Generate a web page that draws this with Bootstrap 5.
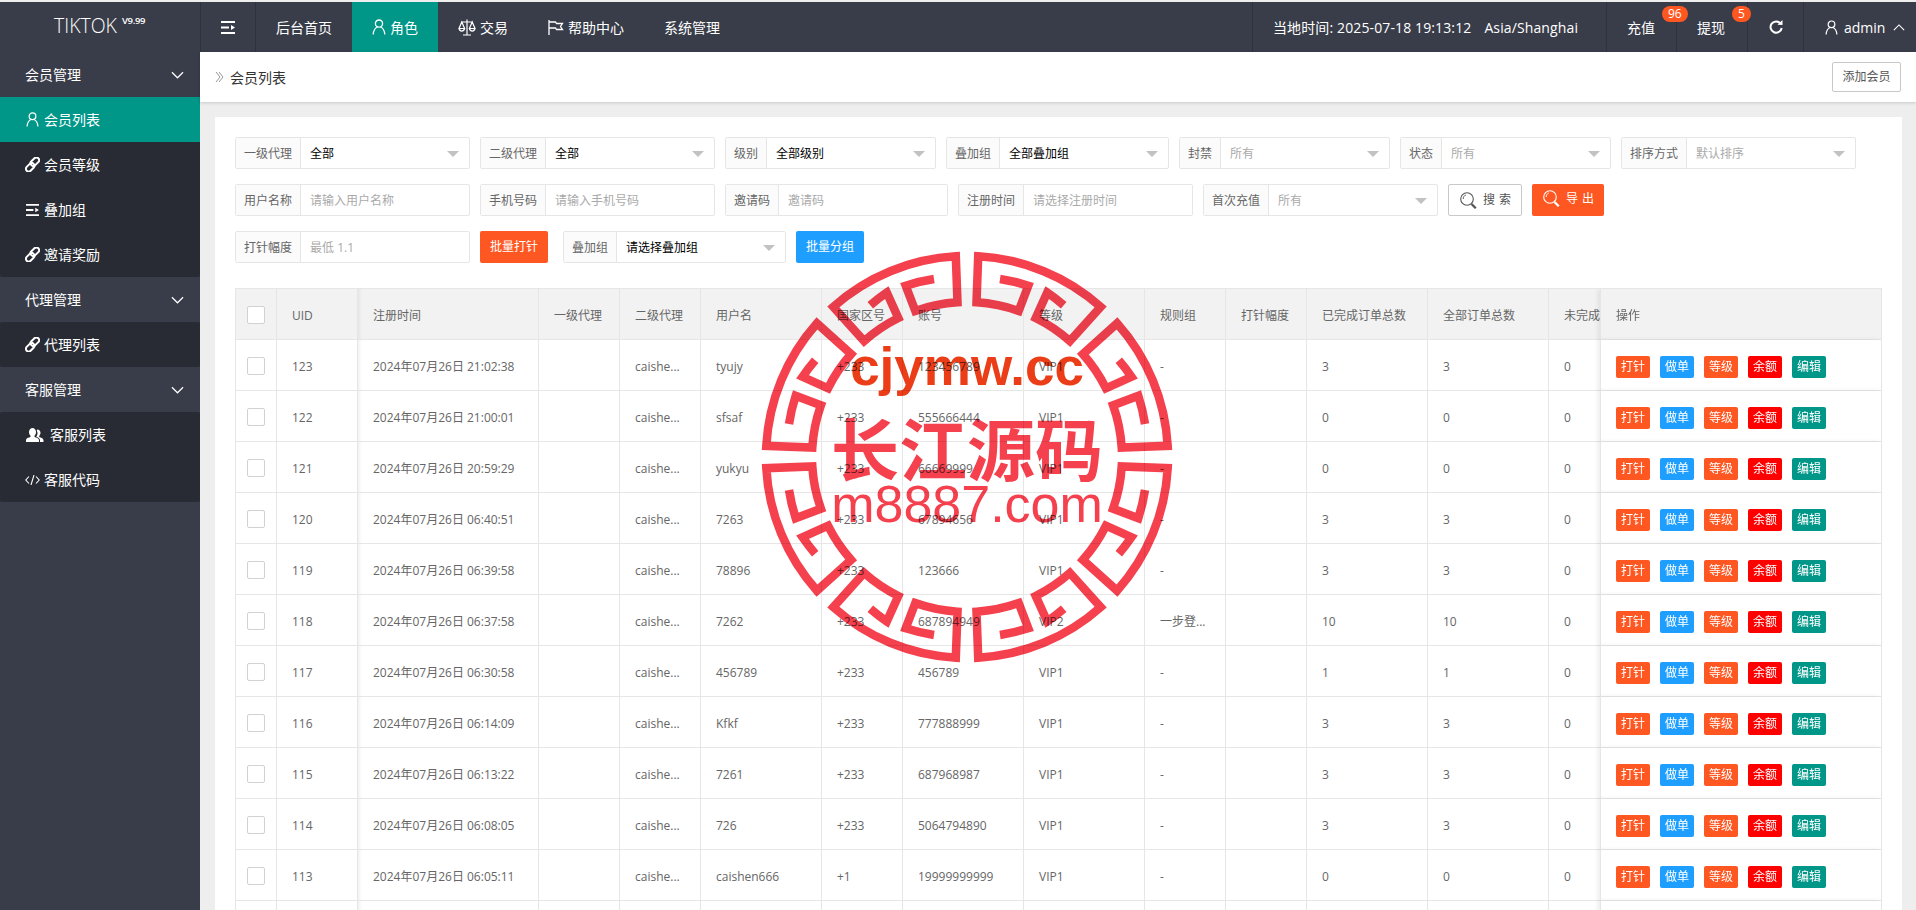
<!DOCTYPE html>
<html lang="zh-CN">
<head>
<meta charset="utf-8">
<title>会员列表</title>
<link href="https://cdn.jsdelivr.net/npm/bootstrap@5.3.0/dist/css/bootstrap.min.css" rel="stylesheet">
<style>
html,body{height:100%;overflow:hidden}
body{font-family:"Open Sans","Noto Sans CJK SC",sans-serif;font-size:14px;color:#666;background:#eee;padding-top:2px;position:relative}
.top-bar{height:50px;background:#393d49;color:#fff}
.logo-box{width:200px;height:50px;flex:none;font-family:"Open Sans",sans-serif;font-size:19.500px;padding-left:54px;line-height:48px;font-weight:300;white-space:nowrap}
.logo-box sup{font-size:9.500px;font-weight:600;top:-.9em;margin-left:5px;letter-spacing:-.3px}
.top-cell{height:50px;padding:0 20px;color:#fff;text-decoration:none;white-space:nowrap;position:relative}
.top-cell:hover{color:#fff}
.cell-line{border-left:1px solid #2f323c}
.top-on{background:#009688}
.menu-cell{width:55px;padding:0}
.clock-cell{width:354px;padding-left:20px;letter-spacing:.12px}
.clock-zone{margin-left:13px}
.money-a{width:70px}
.money-b{width:71px}
.reload-cell{width:56px;padding:0}
.admin-cell{width:113px;padding:0 0 0 21px}
.admin-name{margin:0 8px 0 6px}
.flip{transform:rotate(180deg)}
.pip{position:absolute;left:55px;top:4px;z-index:2;height:16px;min-width:18px;padding:0 6px;border-radius:9px;background:#ff5722;color:#fff;font-size:12px;line-height:16px;text-align:center}
.shell{height:858px}
.side-nav{width:200px;flex:none;background:#393d49;color:#fff}
.side-head,.side-item{height:45px;padding-left:25px;color:#fff;text-decoration:none;position:relative}
.side-head{justify-content:space-between;padding-right:16px}
.side-group{background:#282b33;border-radius:2px}
.side-item{gap:4px}
.side-item:hover,.side-head:hover{color:#fff}
.side-on{background:#009688}
.team-item{padding-left:26px;gap:6px}
.work{min-width:0}
.bread-bar{height:50px;flex:none;background:#fff;box-shadow:0 1px 3px rgba(0,0,0,.16);padding:0 15px;color:#333;position:relative}
.bread-left{gap:6px}
.add-btn{width:69px;height:30px;border:1px solid #c9c9c9;border-radius:2px;background:#fff;color:#555;font-size:12px;padding:0}
.panel{background:#fff;margin:15px 14px 0 15px;padding:20px;flex:1 1 auto;min-height:0;overflow:hidden}
.filter-row{gap:10px;margin-bottom:15px;height:32px}
.fg{height:32px;border:1px solid #e6e6e6;border-radius:2px;background:#fff;font-size:12px;flex:none}
.fg-label{height:100%;padding:1px 8px 0;background:#fbfbfb;border-right:1px solid #e6e6e6;color:#666;white-space:nowrap}
.fg-value{width:168px;height:100%;padding:1px 9px 0;position:relative;color:#000;white-space:nowrap}
.fg-muted{color:#aaa}
.fg-select::after{content:"";position:absolute;right:10px;top:13px;border:6px solid transparent;border-top-color:#c2c2c2;border-bottom:0}
.act-btn{height:32px;border:0;border-radius:2px;color:#fff;font-size:12px;padding:0;width:68px}
.act-gap{margin-right:5px}
.bg-orange{background:#ff5722}
.bg-blue{background:#1e9fff}
.bg-teal{background:#009688}
.bg-red{background:#f00}
.plain-btn{height:32px;width:74px;border:1px solid #c9c9c9;border-radius:2px;background:#fff;color:#555;font-size:12px;gap:6px;padding:0 0 0 11px}
.export-btn{height:32px;width:72px;border:0;border-radius:2px;background:#ff5722;color:#fff;font-size:12px;gap:6px;padding:0 0 3px 11px}
.spaced{letter-spacing:4px}
.tbl-wrap{margin-top:25px;border:1px solid #e6e6e6;border-width:1px 1px 0;overflow:hidden}
.tbl{table-layout:fixed;width:1715px;font-size:12px;color:#666;border-collapse:separate;border-spacing:0;margin:0}
.tbl th,.tbl td{height:51px;border:solid #e6e6e6;border-width:0 1px 1px 0;padding:3px 15px 0;font-weight:400;vertical-align:middle;white-space:nowrap;overflow:hidden;color:#666;background:#fff;box-shadow:none}
.tbl tr>:first-child{padding:0 0 0 11px}
.tbl th{background:#f2f2f2}
.tbl .tm{box-shadow:inset 5px 0 4px -4px rgba(0,0,0,.08)}
.tbl .ops{position:sticky;right:0;border-width:0 0 1px 1px;box-shadow:-2px 0 5px rgba(0,0,0,.08)}
.c-a{width:41px}.c-b{width:81px}.c-c{width:121px}.c-d{width:181px}.c-e{width:281px}
.cbx{display:block;width:18px;height:18px;border:1px solid #d2d2d2;border-radius:2px;background:#fff;margin-top:2px}
.op-row{gap:10px;margin-top:1px}
.op-btn{width:34px;height:22px;line-height:22px;border-radius:2px;color:#fff;text-align:center;font-size:12px}
.stamp{position:absolute;left:757px;top:247px;width:420px;height:420px;pointer-events:none;mix-blend-mode:multiply;z-index:5}
.stamp-a{font:700 53px "Liberation Sans",sans-serif;fill:#ea3d18}
.stamp-b{font:700 68px "Noto Sans CJK SC",sans-serif;fill:#f5404e}
.stamp-c{font:400 52px "Liberation Sans",sans-serif;fill:#f5404e}
</style>
</head>
<body>
<svg width="0" height="0" class="position-absolute">
<defs>
<symbol id="i-user" viewBox="0 0 14 16"><circle cx="7" cy="4.600" r="3.600" fill="none" stroke="currentColor" stroke-width="1.300"/><path d="M1.200 15.500C1.600 11 3.600 8.600 5.600 8M12.800 15.500C12.400 11 10.400 8.600 8.400 8" fill="none" stroke="currentColor" stroke-width="1.300"/></symbol>
<symbol id="i-menu" viewBox="0 0 14 13"><path d="M0 0h14v2H0zM0 11h14v2H0zM0 5.500h8v2H0zM10 4l4 2.500-4 2.500z" fill="currentColor"/></symbol>
<symbol id="i-scale" viewBox="0 0 18 17"><path d="M9 .5v15M5 16h8M3 3h12M3.800 3 1 9.500h5.600zM14.200 3 11.400 9.500H17zM1 9.500c.5 2 1.500 2.600 2.800 2.600s2.300-.6 2.800-2.600M11.400 9.500c.5 2 1.500 2.600 2.800 2.600S16.500 11.500 17 9.500" fill="none" stroke="currentColor" stroke-width="1.200"/></symbol>
<symbol id="i-flag" viewBox="0 0 16 15"><path d="M1 0v15M1 2h6.500l1 1.500h6l-2 3 2 3h-6l-1-1.500H1" fill="none" stroke="currentColor" stroke-width="1.300"/></symbol>
<symbol id="i-link" viewBox="0 0 16 16"><g fill="none" stroke="currentColor" stroke-width="2.100"><rect x="7.600" y="-.2" width="5.800" height="10.400" rx="2.900" transform="rotate(45 10.500 5)"/><rect x="2.600" y="5.800" width="5.800" height="10.400" rx="2.900" transform="rotate(45 5.500 11)"/></g></symbol>
<symbol id="i-team" viewBox="0 0 18 14"><path d="M11.500 1.500c1.700 0 3 1.400 3 3.300 0 1.400-.6 2.500-1.300 3.200v1c1.500.5 4.300 1 4.300 3.500v1.500h-3.500v-2c0-1.700-2-2.700-3.800-3.300.8-.8 1.300-2 1.300-3.400 0-1-.2-1.800-.7-2.500.2-.8.4-1.300.7-1.300z" fill="currentColor"/><path d="M6.500 0c2 0 3.500 1.700 3.500 4 0 1.600-.7 3-1.500 3.800V9c1.800.6 4.500 1.200 4.500 3.500V14H0v-1.500C0 10.200 2.700 9.600 4.500 9V7.800C3.700 7 3 5.600 3 4c0-2.300 1.500-4 3.500-4z" fill="currentColor"/></symbol>
<symbol id="i-code" viewBox="0 0 15 10"><path d="M4 1.500.8 5 4 8.500M11 1.500 14.200 5 11 8.500M9 0 6 10" fill="none" stroke="currentColor" stroke-width="1.100"/></symbol>
<symbol id="i-down" viewBox="0 0 14 8"><path d="M1 1l6 6 6-6" fill="none" stroke="currentColor" stroke-width="1.300"/></symbol>
<symbol id="i-refresh" viewBox="0 0 14 16"><path d="M11.500 4.500A5.600 5.600 0 1 0 12.700 9" fill="none" stroke="currentColor" stroke-width="2"/><path d="M8.500 5.800 13.500 6V1z" fill="currentColor"/></symbol>
<symbol id="i-search" viewBox="0 0 17 17"><circle cx="7" cy="7" r="6.300" fill="none" stroke="currentColor" stroke-width="1.100"/><path d="M3.200 7c0-2 1-3.400 2.600-4" fill="none" stroke="currentColor" stroke-width="1"/><path d="m11.500 12 4.300 4.300" fill="none" stroke="currentColor" stroke-width="2.200"/></symbol>
<symbol id="i-dbl" viewBox="0 0 9 12"><path d="M1 1l4 5-4 5M4 1l4 5-4 5" fill="none" stroke="#999" stroke-width="1"/></symbol>
</defs>
</svg>

<header class="top-bar d-flex align-items-stretch">
  <div class="logo-box">TIKTOK<sup>V9.99</sup></div>
  <a class="top-cell menu-cell cell-line d-flex align-items-center justify-content-center" href="#"><svg width="14" height="13"><use href="#i-menu"/></svg></a>
  <a class="top-cell cell-line d-flex align-items-center" href="#">后台首页</a>
  <a class="top-cell top-on d-flex align-items-center gap-1" href="#"><svg width="14" height="16"><use href="#i-user"/></svg><span>角色</span></a>
  <a class="top-cell d-flex align-items-center gap-1" href="#"><svg width="18" height="17"><use href="#i-scale"/></svg><span>交易</span></a>
  <a class="top-cell d-flex align-items-center gap-1" href="#"><svg width="16" height="15"><use href="#i-flag"/></svg><span>帮助中心</span></a>
  <a class="top-cell d-flex align-items-center" href="#">系统管理</a>
  <div class="ms-auto d-flex align-items-stretch">
    <div class="top-cell clock-cell cell-line d-flex align-items-center"><span>当地时间: 2025-07-18 19:13:12</span><span class="clock-zone">Asia/Shanghai</span></div>
    <a class="top-cell money-a cell-line d-flex align-items-center" href="#">充值<span class="pip">96</span></a>
    <a class="top-cell money-b cell-line d-flex align-items-center" href="#">提现<span class="pip">5</span></a>
    <a class="top-cell reload-cell cell-line d-flex align-items-center justify-content-center" href="#"><svg width="14" height="16"><use href="#i-refresh"/></svg></a>
    <a class="top-cell admin-cell cell-line d-flex align-items-center" href="#"><svg width="13" height="15"><use href="#i-user"/></svg><span class="admin-name">admin</span><svg class="flip" width="12" height="7"><use href="#i-down"/></svg></a>
  </div>
</header>

<div class="shell d-flex">
  <nav class="side-nav">
    <a class="side-head d-flex align-items-center" href="#"><span>会员管理</span><svg width="13" height="8"><use href="#i-down"/></svg></a>
    <div class="side-group">
      <a class="side-item side-on d-flex align-items-center" href="#"><svg width="15" height="15"><use href="#i-user"/></svg><span>会员列表</span></a>
      <a class="side-item d-flex align-items-center" href="#"><svg width="15" height="15"><use href="#i-link"/></svg><span>会员等级</span></a>
      <a class="side-item d-flex align-items-center" href="#"><svg width="15" height="12"><use href="#i-menu"/></svg><span>叠加组</span></a>
      <a class="side-item d-flex align-items-center" href="#"><svg width="15" height="15"><use href="#i-link"/></svg><span>邀请奖励</span></a>
    </div>
    <a class="side-head d-flex align-items-center" href="#"><span>代理管理</span><svg width="13" height="8"><use href="#i-down"/></svg></a>
    <div class="side-group">
      <a class="side-item d-flex align-items-center" href="#"><svg width="15" height="15"><use href="#i-link"/></svg><span>代理列表</span></a>
    </div>
    <a class="side-head d-flex align-items-center" href="#"><span>客服管理</span><svg width="13" height="8"><use href="#i-down"/></svg></a>
    <div class="side-group">
      <a class="side-item team-item d-flex align-items-center" href="#"><svg width="18" height="14"><use href="#i-team"/></svg><span>客服列表</span></a>
      <a class="side-item d-flex align-items-center" href="#"><svg width="15" height="10"><use href="#i-code"/></svg><span>客服代码</span></a>
    </div>
  </nav>

  <main class="work flex-grow-1 d-flex flex-column">
    <div class="bread-bar d-flex align-items-center justify-content-between">
      <div class="bread-left d-flex align-items-center"><svg width="9" height="12"><use href="#i-dbl"/></svg><span>会员列表</span></div>
      <button class="add-btn" type="button">添加会员</button>
    </div>
    <section class="panel">
      <div class="filter-row d-flex">
        <div class="fg d-flex align-items-center"><span class="fg-label d-flex align-items-center">一级代理</span><span class="fg-value fg-select d-flex align-items-center">全部</span></div>
        <div class="fg d-flex align-items-center"><span class="fg-label d-flex align-items-center">二级代理</span><span class="fg-value fg-select d-flex align-items-center">全部</span></div>
        <div class="fg d-flex align-items-center"><span class="fg-label d-flex align-items-center">级别</span><span class="fg-value fg-select d-flex align-items-center">全部级别</span></div>
        <div class="fg d-flex align-items-center"><span class="fg-label d-flex align-items-center">叠加组</span><span class="fg-value fg-select d-flex align-items-center">全部叠加组</span></div>
        <div class="fg d-flex align-items-center"><span class="fg-label d-flex align-items-center">封禁</span><span class="fg-value fg-select fg-muted d-flex align-items-center">所有</span></div>
        <div class="fg d-flex align-items-center"><span class="fg-label d-flex align-items-center">状态</span><span class="fg-value fg-select fg-muted d-flex align-items-center">所有</span></div>
        <div class="fg d-flex align-items-center"><span class="fg-label d-flex align-items-center">排序方式</span><span class="fg-value fg-select fg-muted d-flex align-items-center">默认排序</span></div>
      </div>
      <div class="filter-row d-flex">
        <div class="fg d-flex align-items-center"><span class="fg-label d-flex align-items-center">用户名称</span><span class="fg-value fg-muted d-flex align-items-center">请输入用户名称</span></div>
        <div class="fg d-flex align-items-center"><span class="fg-label d-flex align-items-center">手机号码</span><span class="fg-value fg-muted d-flex align-items-center">请输入手机号码</span></div>
        <div class="fg d-flex align-items-center"><span class="fg-label d-flex align-items-center">邀请码</span><span class="fg-value fg-muted d-flex align-items-center">邀请码</span></div>
        <div class="fg d-flex align-items-center"><span class="fg-label d-flex align-items-center">注册时间</span><span class="fg-value fg-muted d-flex align-items-center">请选择注册时间</span></div>
        <div class="fg d-flex align-items-center"><span class="fg-label d-flex align-items-center">首次充值</span><span class="fg-value fg-select fg-muted d-flex align-items-center">所有</span></div>
        <button class="plain-btn d-flex align-items-center" type="button"><svg width="17" height="17"><use href="#i-search"/></svg><span class="spaced">搜索</span></button>
        <button class="export-btn d-flex align-items-center" type="button"><svg width="17" height="17"><use href="#i-search"/></svg><span class="spaced">导出</span></button>
      </div>
      <div class="filter-row d-flex">
        <div class="fg d-flex align-items-center"><span class="fg-label d-flex align-items-center">打针幅度</span><span class="fg-value fg-muted d-flex align-items-center">最低 1.1</span></div>
        <button class="act-btn act-gap bg-orange" type="button">批量打针</button>
        <div class="fg d-flex align-items-center"><span class="fg-label d-flex align-items-center">叠加组</span><span class="fg-value fg-select d-flex align-items-center">请选择叠加组</span></div>
        <button class="act-btn bg-blue" type="button">批量分组</button>
      </div>
      <div class="tbl-wrap">
        <table class="tbl table mb-0">
          <colgroup><col class="c-a"><col class="c-b"><col class="c-d"><col class="c-b"><col class="c-b"><col class="c-c"><col class="c-b"><col class="c-c"><col class="c-c"><col class="c-b"><col class="c-b"><col class="c-c"><col class="c-c"><col class="c-c"><col class="c-e"></colgroup>
          <thead><tr><th><span class="cbx"></span></th><th>UID</th><th class="tm">注册时间</th><th>一级代理</th><th>二级代理</th><th>用户名</th><th>国家区号</th><th>账号</th><th>等级</th><th>规则组</th><th>打针幅度</th><th>已完成订单总数</th><th>全部订单总数</th><th>未完成订单总数</th><th class="ops">操作</th></tr></thead>
          <tbody>
            <tr><td><span class="cbx"></span></td><td>123</td><td class="tm">2024年07月26日 21:02:38</td><td></td><td>caishe...</td><td>tyujy</td><td>+233</td><td>123456789</td><td>VIP1</td><td>-</td><td></td><td>3</td><td>3</td><td>0</td><td class="ops"><div class="op-row d-flex"><span class="op-btn bg-orange">打针</span><span class="op-btn bg-blue">做单</span><span class="op-btn bg-orange">等级</span><span class="op-btn bg-red">余额</span><span class="op-btn bg-teal">编辑</span></div></td></tr>
            <tr><td><span class="cbx"></span></td><td>122</td><td class="tm">2024年07月26日 21:00:01</td><td></td><td>caishe...</td><td>sfsaf</td><td>+233</td><td>555666444</td><td>VIP1</td><td>-</td><td></td><td>0</td><td>0</td><td>0</td><td class="ops"><div class="op-row d-flex"><span class="op-btn bg-orange">打针</span><span class="op-btn bg-blue">做单</span><span class="op-btn bg-orange">等级</span><span class="op-btn bg-red">余额</span><span class="op-btn bg-teal">编辑</span></div></td></tr>
            <tr><td><span class="cbx"></span></td><td>121</td><td class="tm">2024年07月26日 20:59:29</td><td></td><td>caishe...</td><td>yukyu</td><td>+233</td><td>66669999</td><td>VIP1</td><td>-</td><td></td><td>0</td><td>0</td><td>0</td><td class="ops"><div class="op-row d-flex"><span class="op-btn bg-orange">打针</span><span class="op-btn bg-blue">做单</span><span class="op-btn bg-orange">等级</span><span class="op-btn bg-red">余额</span><span class="op-btn bg-teal">编辑</span></div></td></tr>
            <tr><td><span class="cbx"></span></td><td>120</td><td class="tm">2024年07月26日 06:40:51</td><td></td><td>caishe...</td><td>7263</td><td>+233</td><td>67894656</td><td>VIP1</td><td>-</td><td></td><td>3</td><td>3</td><td>0</td><td class="ops"><div class="op-row d-flex"><span class="op-btn bg-orange">打针</span><span class="op-btn bg-blue">做单</span><span class="op-btn bg-orange">等级</span><span class="op-btn bg-red">余额</span><span class="op-btn bg-teal">编辑</span></div></td></tr>
            <tr><td><span class="cbx"></span></td><td>119</td><td class="tm">2024年07月26日 06:39:58</td><td></td><td>caishe...</td><td>78896</td><td>+233</td><td>123666</td><td>VIP1</td><td>-</td><td></td><td>3</td><td>3</td><td>0</td><td class="ops"><div class="op-row d-flex"><span class="op-btn bg-orange">打针</span><span class="op-btn bg-blue">做单</span><span class="op-btn bg-orange">等级</span><span class="op-btn bg-red">余额</span><span class="op-btn bg-teal">编辑</span></div></td></tr>
            <tr><td><span class="cbx"></span></td><td>118</td><td class="tm">2024年07月26日 06:37:58</td><td></td><td>caishe...</td><td>7262</td><td>+233</td><td>687894949</td><td>VIP2</td><td>一步登...</td><td></td><td>10</td><td>10</td><td>0</td><td class="ops"><div class="op-row d-flex"><span class="op-btn bg-orange">打针</span><span class="op-btn bg-blue">做单</span><span class="op-btn bg-orange">等级</span><span class="op-btn bg-red">余额</span><span class="op-btn bg-teal">编辑</span></div></td></tr>
            <tr><td><span class="cbx"></span></td><td>117</td><td class="tm">2024年07月26日 06:30:58</td><td></td><td>caishe...</td><td>456789</td><td>+233</td><td>456789</td><td>VIP1</td><td>-</td><td></td><td>1</td><td>1</td><td>0</td><td class="ops"><div class="op-row d-flex"><span class="op-btn bg-orange">打针</span><span class="op-btn bg-blue">做单</span><span class="op-btn bg-orange">等级</span><span class="op-btn bg-red">余额</span><span class="op-btn bg-teal">编辑</span></div></td></tr>
            <tr><td><span class="cbx"></span></td><td>116</td><td class="tm">2024年07月26日 06:14:09</td><td></td><td>caishe...</td><td>Kfkf</td><td>+233</td><td>777888999</td><td>VIP1</td><td>-</td><td></td><td>3</td><td>3</td><td>0</td><td class="ops"><div class="op-row d-flex"><span class="op-btn bg-orange">打针</span><span class="op-btn bg-blue">做单</span><span class="op-btn bg-orange">等级</span><span class="op-btn bg-red">余额</span><span class="op-btn bg-teal">编辑</span></div></td></tr>
            <tr><td><span class="cbx"></span></td><td>115</td><td class="tm">2024年07月26日 06:13:22</td><td></td><td>caishe...</td><td>7261</td><td>+233</td><td>687968987</td><td>VIP1</td><td>-</td><td></td><td>3</td><td>3</td><td>0</td><td class="ops"><div class="op-row d-flex"><span class="op-btn bg-orange">打针</span><span class="op-btn bg-blue">做单</span><span class="op-btn bg-orange">等级</span><span class="op-btn bg-red">余额</span><span class="op-btn bg-teal">编辑</span></div></td></tr>
            <tr><td><span class="cbx"></span></td><td>114</td><td class="tm">2024年07月26日 06:08:05</td><td></td><td>caishe...</td><td>726</td><td>+233</td><td>5064794890</td><td>VIP1</td><td>-</td><td></td><td>3</td><td>3</td><td>0</td><td class="ops"><div class="op-row d-flex"><span class="op-btn bg-orange">打针</span><span class="op-btn bg-blue">做单</span><span class="op-btn bg-orange">等级</span><span class="op-btn bg-red">余额</span><span class="op-btn bg-teal">编辑</span></div></td></tr>
            <tr><td><span class="cbx"></span></td><td>113</td><td class="tm">2024年07月26日 06:05:11</td><td></td><td>caishe...</td><td>caishen666</td><td>+1</td><td>19999999999</td><td>VIP1</td><td>-</td><td></td><td>0</td><td>0</td><td>0</td><td class="ops"><div class="op-row d-flex"><span class="op-btn bg-orange">打针</span><span class="op-btn bg-blue">做单</span><span class="op-btn bg-orange">等级</span><span class="op-btn bg-red">余额</span><span class="op-btn bg-teal">编辑</span></div></td></tr>
            <tr><td></td><td></td><td class="tm"></td><td></td><td></td><td></td><td></td><td></td><td></td><td></td><td></td><td></td><td></td><td></td><td class="ops"></td></tr>
          </tbody>
        </table>
      </div>
    </section>
  </main>
</div>

<svg class="stamp" viewBox="-210 -210 420 420">
  <defs>
    <path id="octant" d="M33 -178A181 181 0 0 1 61.300 -171.300L51.700 -146.100A155 155 0 0 0 9.500 -154.700L11.200 -200.700A201 201 0 0 1 133.700 -150.100L102.900 -115.900A155 155 0 0 0 68.700 -139L80.200 -164.500A183 183 0 0 1 96.700 -151.800" fill="none" stroke="#f5404e" stroke-width="8.500"/>
    <g id="quad"><use href="#octant"/><use href="#octant" transform="rotate(90) scale(-1 1)"/></g>
  </defs>
  <use href="#quad"/><use href="#quad" transform="rotate(90)"/><use href="#quad" transform="rotate(180)"/><use href="#quad" transform="rotate(270)"/>
  <text class="stamp-a" x="0" y="-72" text-anchor="middle">cjymw.cc</text>
  <text class="stamp-b" x="0" y="19" text-anchor="middle">长江源码</text>
  <text class="stamp-c" x="0" y="65" text-anchor="middle">m8887.com</text>
</svg>
<script src="https://cdn.jsdelivr.net/npm/bootstrap@5.3.0/dist/js/bootstrap.bundle.min.js"></script>
</body>
</html>
